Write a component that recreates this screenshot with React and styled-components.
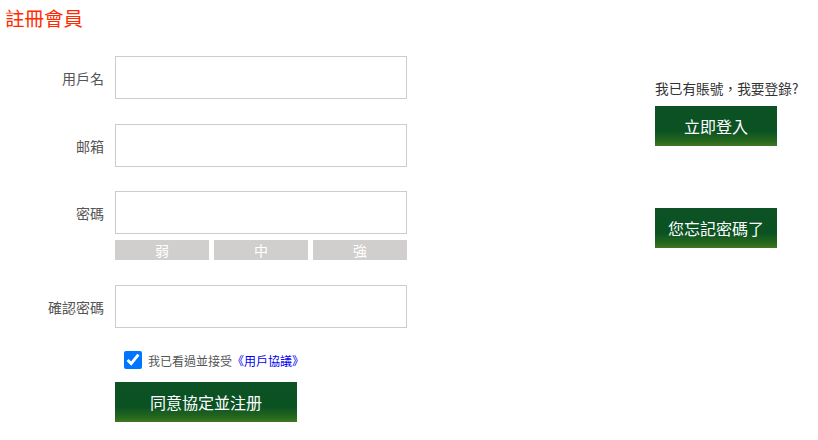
import React from "react";
import styled, { createGlobalStyle } from "styled-components";

const GlobalStyle = createGlobalStyle`
  body {
    margin: 0;
    background: #fff;
    font-family: "Noto Sans CJK TC", "Liberation Sans", sans-serif;
  }
`;

const Page = styled.main`
  padding: 5px 5px 0 5px;
`;

const Title = styled.h2`
  margin: 0;
  font-size: 19.5px;
  font-weight: normal;
  line-height: 26px;
  color: #ff2a00;
`;

const Layout = styled.div`
  display: flex;
  margin-top: 25px;
`;

const Form = styled.form`
  width: 650px;
  display: flex;
  flex-direction: column;
`;

const Row = styled.div`
  display: grid;
  grid-template-columns: 99px 292px;
  column-gap: 11px;
  align-items: center;
  margin-bottom: ${(p) => p.$gap ?? 25}px;
`;

const Label = styled.label`
  text-align: right;
  font-size: 14px;
  color: #555;
`;

const Input = styled.input`
  box-sizing: border-box;
  height: 43px;
  width: 292px;
  border: 1px solid #ccc;
  padding: 0 8px;
  font-size: 14px;
  outline: none;
`;

const Strength = styled.div`
  grid-column: 2;
  display: grid;
  grid-template-columns: repeat(3, 1fr);
  gap: 5px;
  margin-top: 6px;
`;

const Level = styled.span`
  height: 20px;
  line-height: 20px;
  background: #d0cfcd;
  color: #fff;
  text-align: center;
  font-size: 14px;
`;

const Agree = styled.div`
  display: flex;
  align-items: center;
  gap: 6px;
  margin: -2px 0 0 119px;
  font-size: 12px;
  color: #555;
`;

const Check = styled.input`
  width: 18px;
  height: 18px;
  margin: 0;
  accent-color: #0075ff;
`;

const Link = styled.a`
  color: #0000ee;
  text-decoration: none;
`;

const GreenButton = styled.button`
  width: ${(p) => p.$w}px;
  height: 40px;
  border: none;
  padding: 0;
  color: #fff;
  font-family: inherit;
  font-size: 16px;
  background: linear-gradient(#0c5224 0%, #0b5223 62%, #1f621f 82%, #2e6c1c 92%, #3f7826 100%);
  cursor: pointer;
`;

const Submit = styled.div`
  margin: 13px 0 0 110px;
`;

const Side = styled.aside`
  display: flex;
  flex-direction: column;
  align-items: flex-start;
  margin-top: 22px;
`;

const Hint = styled.p`
  margin: 0 0 8px;
  font-size: 13.7px;
  color: #333;
  line-height: 20px;
`;

const Spacer = styled.div`
  height: 62px;
`;

export default function App() {
  return (
    <Page>
      <GlobalStyle />
      <Title>註冊會員</Title>
      <Layout>
        <Form onSubmit={(e) => e.preventDefault()}>
          <Row>
            <Label>用戶名</Label>
            <Input />
          </Row>
          <Row $gap={24}>
            <Label>邮箱</Label>
            <Input />
          </Row>
          <Row>
            <Label>密碼</Label>
            <Input type="password" />
            <Strength>
              <Level>弱</Level>
              <Level>中</Level>
              <Level>強</Level>
            </Strength>
          </Row>
          <Row>
            <Label>確認密碼</Label>
            <Input type="password" />
          </Row>
          <Agree>
            <Check type="checkbox" defaultChecked />
            <span>
              我已看過並接受<Link href="#">《用戶協議》</Link>
            </span>
          </Agree>
          <Submit>
            <GreenButton type="submit" $w={182}>同意協定並注册</GreenButton>
          </Submit>
        </Form>
        <Side>
          <Hint>我已有賬號，我要登錄?</Hint>
          <GreenButton $w={122}>立即登入</GreenButton>
          <Spacer />
          <GreenButton $w={122}>您忘記密碼了</GreenButton>
        </Side>
      </Layout>
    </Page>
  );
}
